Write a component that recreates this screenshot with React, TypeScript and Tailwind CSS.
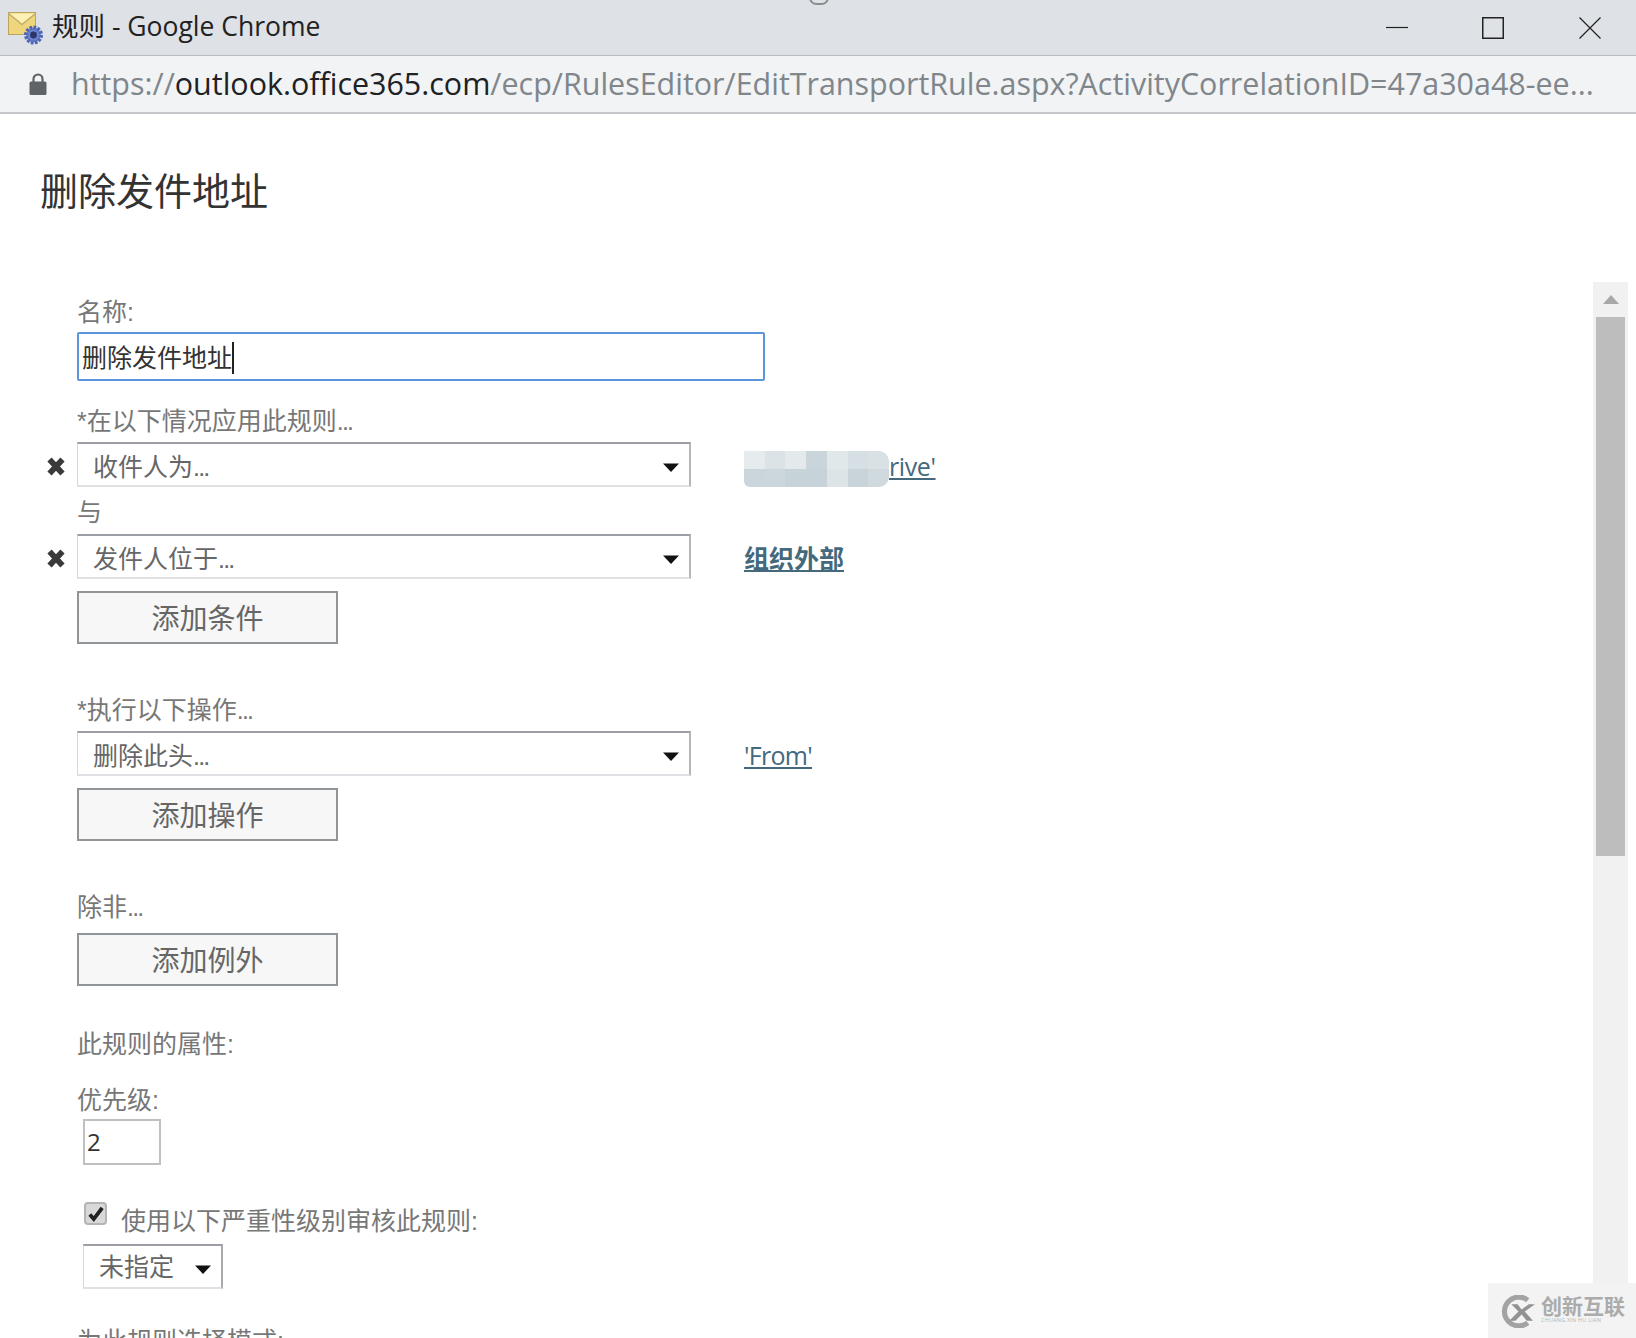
import type { ReactNode } from 'react';

const cjk = 'font-["Open_Sans","Noto_Sans_CJK_SC",sans-serif]';
const formFont = 'font-["Liberation_Sans","Noto_Sans_CJK_SC",sans-serif]';

function Dots() {
  return <span className="tracking-[-1.8px]">...</span>;
}

function Caret() {
  return (
    <svg viewBox="0 0 16 9" className="mt-[5px] h-[9px] w-[16px] shrink-0">
      <path d="M0 0.5h16L8 9z" fill="#111" />
    </svg>
  );
}

function RuleSelect({ text }: { text: ReactNode }) {
  return (
    <div
      className={`flex h-[45px] w-[614px] items-center justify-between border-t-2 border-r-2 border-b-2 border-l border-t-[#9c9ea5] border-r-[#b4b6bb] border-b-[#dfe1e5] border-l-[#d5d7db] pl-[15px] pr-[10px] text-[25px] text-[#666] ${formFont}`}
    >
      <span className="mt-[6px]">{text}</span>
      <Caret />
    </div>
  );
}

function AddButton({ text, className }: { text: string; className: string }) {
  return (
    <button
      type="button"
      className={`block h-[53px] w-[261px] border-2 border-[#8f9599] bg-[#f7f7f7] text-center text-[28px] leading-none text-[#666] ${className}`}
    >
      {text}
    </button>
  );
}

function Label({ text, className }: { text: ReactNode; className: string }) {
  return <div className={`h-8 pl-[30px] text-[25px] leading-8 text-[#777] ${formFont} ${className}`}>{text}</div>;
}

function RemoveIcon() {
  return (
    <svg viewBox="0 0 20 20" className="-ml-[1px] mt-[3px] h-[21px] w-[20px] shrink-0">
      <path d="M3.5 3l13 14M16.5 3l-13 14" stroke="#3a3a3a" strokeWidth="5.8" />
    </svg>
  );
}

function FaviconIcon() {
  return (
    <svg viewBox="0 0 35 33" className="mt-[2px] h-[33px] w-[35px] shrink-0">
      <rect x="0.5" y="0.5" width="27" height="22" fill="#efd67c" stroke="#b9a55e" />
      <path d="M0.5 1.5l13.5 11 13.5-11" fill="#fff0b4" stroke="#c2ad68" strokeWidth="1.5" />
      <circle cx="25.5" cy="23" r="7.5" fill="#6d83d2" stroke="#4f66b6" strokeWidth="4" strokeDasharray="2.6 1.3" />
      <circle cx="25.5" cy="23" r="3.4" fill="#2b3768" />
    </svg>
  );
}

function BlurredText() {
  const rows = [
    ['#e6ebed', '#dbe3e6', '#e4e9eb', '#c9d5da', '#e1e8ea', '#d6dfe3', '#d9e1e4'],
    ['#cad6db', '#cbd7dc', '#c6d3d8', '#c7d3d8', '#dde4e7', '#c8d4d9', '#cfd9de'],
  ];
  return (
    <div className="mt-[8px] flex h-[36px] w-[145px] shrink-0 flex-col overflow-hidden rounded-r-[10px] rounded-bl-[6px]">
      {rows.map((row, i) => (
        <div key={i} className="flex h-[18px]">
          {row.map((c, j) => (
            <div key={j} className="h-full w-[21px]" style={{ backgroundColor: c }} />
          ))}
        </div>
      ))}
    </div>
  );
}

function Watermark() {
  return (
    <div className="absolute bottom-0 right-0 flex h-[55px] w-[148px] items-start gap-[6px] bg-[#f3f3f3] pl-[12px] pt-[12px]">
      <svg viewBox="0 0 34 32" className="h-[33px] w-[35px] shrink-0">
        <path d="M27 5A14 14 0 1 0 27 27" fill="none" stroke="#a3a3a3" strokeWidth="5" />
        <path d="M11 9h6l4 5 7-5h6l-10 7 8 9h-6l-5-6-6 6h-6l9-9z" fill="#929292" />
      </svg>
      <div className="flex flex-col">
        <span className="text-[21px] leading-[22px] font-bold text-[#ababab]">创新互联</span>
        <span className="text-[5.5px] leading-[7px] tracking-[0.2px] text-[#b4b4b4]">CHUANG XIN HU LIAN</span>
      </div>
    </div>
  );
}

export default function App() {
  return (
    <div className={`relative h-[1338px] w-[1636px] overflow-hidden bg-white ${cjk}`}>
      <header className="relative flex h-[56px] items-center border-b border-[#b9bbbe] bg-[#dee1e6] pl-[8px]">
        <FaviconIcon />
        <span className="mb-[2px] ml-[9px] text-[26.5px] text-[#222]">规则 - Google Chrome</span>
        <div className="absolute left-[809px] top-[-10px] h-[15px] w-[20px] rounded-full border-2 border-[#8b8d90]" />
        <div className="ml-auto flex items-center">
          <svg viewBox="0 0 22 22" className="h-[22px] w-[22px]">
            <path d="M0 10.5h22" stroke="#222" strokeWidth="1.2" />
          </svg>
          <svg viewBox="0 0 22 22" className="ml-[74px] h-[22px] w-[22px]">
            <rect x="0.75" y="0.75" width="20.5" height="20.5" fill="none" stroke="#222" strokeWidth="1.5" />
          </svg>
          <svg viewBox="0 0 22 22" className="ml-[75px] mr-[35px] h-[22px] w-[22px]">
            <path d="M0.5 0.5l21 21M21.5 0.5l-21 21" stroke="#222" strokeWidth="1.2" />
          </svg>
        </div>
      </header>

      <div className="flex h-[58px] items-center border-b-2 border-[#c4c6c9] bg-[#f1f3f4] pl-[29px]">
        <svg viewBox="0 0 18 24" className="h-[24px] w-[18px] shrink-0">
          <path d="M4.5 10V7a4.5 4.5 0 0 1 9 0v3" fill="none" stroke="#5f6368" strokeWidth="2.2" />
          <rect x="0.5" y="9.5" width="17" height="13.5" rx="1.5" fill="#5f6368" />
        </svg>
        <div className="mb-[2px] ml-[24px] whitespace-nowrap text-[30.45px] leading-none text-[#80868b]">
          https://<span className="text-[#202124]">outlook.office365.com</span>
          /ecp/RulesEditor/EditTransportRule.aspx?ActivityCorrelationID=47a30a48-ee...
        </div>
      </div>

      <div className="flex">
        <main className="min-w-0 flex-1">
          <h1 className="ml-[40px] mt-[46px] h-[60px] text-[38px] font-normal leading-[60px] text-[#333]">删除发件地址</h1>
          <div className="ml-[47px]">
            <Label text="名称:" className="mt-[76px]" />
            <div className="ml-[30px] mt-[4px] flex h-[49px] w-[688px] items-center rounded-[2px] border-2 border-[#5b95dc] pl-[3px] pt-[2px] text-[25px] text-[#333]">
              删除发件地址
              <span className="h-[32px] w-[2px] bg-[#222]" />
            </div>

            <Label text={<>*在以下情况应用此规则<Dots /></>} className="mt-[24px]" />
            <div className="mt-[5px] flex items-center">
              <div className="w-[30px]"><RemoveIcon /></div>
              <RuleSelect text={<>收件人为<Dots /></>} />
              <div className="ml-[53px] flex items-center text-[25px] text-[#44697c]">
                <BlurredText />
                <span className="mt-[4px] tracking-[-0.4px] underline">rive'</span>
              </div>
            </div>
            <Label text="与" className="mt-[9px]" />
            <div className="mt-[6px] flex items-center">
              <div className="w-[30px]"><RemoveIcon /></div>
              <RuleSelect text={<>发件人位于<Dots /></>} />
              <span className="ml-[53px] mt-[4px] text-[25px] font-bold text-[#44697c] underline">组织外部</span>
            </div>
            <div className="ml-[30px]">
              <AddButton text="添加条件" className="mt-[12px]" />
            </div>

            <Label text={<>*执行以下操作<Dots /></>} className="mt-[50px]" />
            <div className="ml-[30px] mt-[5px] flex items-center">
              <RuleSelect text={<>删除此头<Dots /></>} />
              <span className="ml-[53px] mt-[4px] text-[25px] tracking-[-0.7px] text-[#44697c] underline">'From'</span>
            </div>
            <div className="ml-[30px]">
              <AddButton text="添加操作" className="mt-[12px]" />
            </div>

            <Label text={<>除非<Dots /></>} className="mt-[50px]" />
            <div className="ml-[30px]">
              <AddButton text="添加例外" className="mt-[10px]" />
            </div>

            <Label text="此规则的属性:" className="mt-[42px]" />
            <Label text="优先级:" className="mt-[24px]" />
            <div className="ml-[36px] mt-[3px] flex h-[46px] w-[78px] items-center border-2 border-[#c0c0c0] pl-[2px] text-[24px] text-[#333]">2</div>

            <div className="ml-[37px] mt-[37px] flex h-[42px] items-start">
              <div className="flex h-[23px] w-[23px] items-center justify-center rounded-[4px] border-2 border-[#b5b5b5] bg-[#d8d8d8]">
                <svg viewBox="0 0 16 16" className="h-[18px] w-[18px]">
                  <path d="M2.5 8.5l3.5 4L13.5 2.5" fill="none" stroke="#222" strokeWidth="3.4" />
                </svg>
              </div>
              <span className={`ml-[14px] mt-[3px] text-[25px] leading-8 text-[#777] ${formFont}`}>使用以下严重性级别审核此规则:</span>
            </div>
            <div className="ml-[36px] flex h-[45px] w-[140px] items-center justify-between border-t-2 border-r-2 border-b-2 border-l border-t-[#9c9ea5] border-r-[#a8aab0] border-b-[#dfe1e5] border-l-[#d5d7db] pl-[15px] pr-[10px] text-[25px] text-[#666]">
              <span>未指定</span>
              <Caret />
            </div>
            <Label text="为此规则选择模式:" className="mt-[36px]" />
          </div>
        </main>

        <div className="mr-[8px] mt-[168px] h-[1100px] w-[35px] shrink-0 bg-[#f1f1f1] px-[3px]">
          <div className="flex h-[35px] items-center justify-center">
            <svg viewBox="0 0 16 9" className="h-[9px] w-[16px]">
              <path d="M8 0l8 9H0z" fill="#a8a8a8" />
            </svg>
          </div>
          <div className="h-[539px] bg-[#bdbdbd]" />
        </div>
      </div>

      <Watermark />
    </div>
  );
}
